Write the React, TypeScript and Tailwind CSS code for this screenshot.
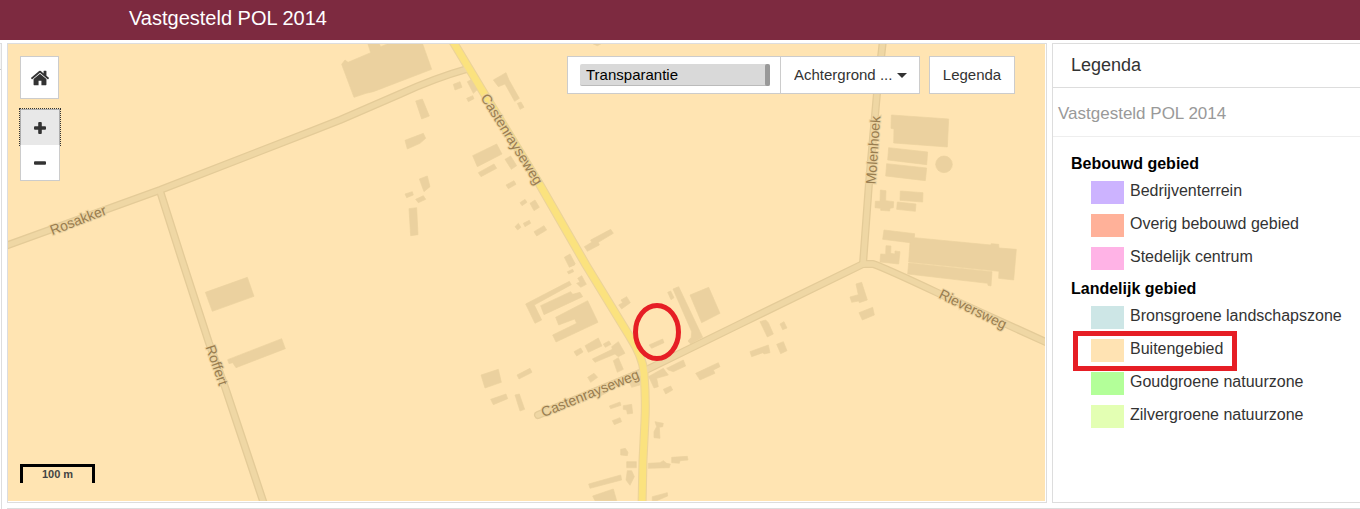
import { useState } from "react";
import clsx from "clsx";

/* ================= DATA ================= */

type LegendItem = { label: string; swatch: string; highlighted?: boolean };
type LegendGroup = { title: string; items: LegendItem[] };

const legend: LegendGroup[] = [
  {
    title: "Bebouwd gebied",
    items: [
      { label: "Bedrijventerrein", swatch: "bg-[#ccb3ff]" },
      { label: "Overig bebouwd gebied", swatch: "bg-[#ffb199]" },
      { label: "Stedelijk centrum", swatch: "bg-[#ffb3e6]" },
    ],
  },
  {
    title: "Landelijk gebied",
    items: [
      { label: "Bronsgroene landschapszone", swatch: "bg-[#cde6e6]" },
      { label: "Buitengebied", swatch: "bg-[#ffe3b3]", highlighted: true },
      { label: "Goudgroene natuurzone", swatch: "bg-[#b3ff99]" },
      { label: "Zilvergroene natuurzone", swatch: "bg-[#e3ffb3]" },
    ],
  },
];

// Buildings per map tile, drawn at three units per pixel
const tiles = [
  {
    x: 340,
    y: 30,
    buildings: [
      "M5 103L15 90 24 97 92 68 84 42 118 42 122 50 142 42 248 42 275 118 100 185 78 190 42 202Z",
      "M340 163L360 155 366 172 345 180Z",
      "M382 155L395 148 413 178 400 190Z",
      "M380 205L398 197 402 206 385 215Z",
      "M460 150L498 128 507 150 538 205 524 214 495 162 475 170Z",
      "M532 220L543 216 552 232 540 238Z",
      "M227 213L247 207 268 258 245 267Z",
      "M195 331L250 310 257 325 240 340 202 357Z",
      "M398 377L470 342 486 372 412 410Z",
      "M415 428L462 402 470 415 423 440Z",
      "M495 388L512 378 530 407 514 418Z",
      "M498 465L522 452 528 463 505 476Z",
      "M238 447L262 438 270 470 252 485Z",
      "M195 492L217 485 220 495 200 503Z",
      "M227 508L250 497 257 508 235 518Z",
      "M207 536L230 533 234 614 212 617Z",
      "M540 518L555 508 561 517 546 527Z",
      "M570 520L585 510 598 532 582 542Z",
      "M525 590L535 580 543 592 533 600Z",
      "M550 580L568 571 572 580 555 590Z",
      "M582 605L612 587 620 600 590 618Z",
      "M733 650L755 637 752 630 812 598 820 610 775 637 778 645 742 664Z",
      "M673 682L690 672 706 702 688 712Z",
      "M760 42L782 42 772 47Z",
    ],
  },
  {
    x: 680,
    y: 30,
    buildings: [
      "M634 255L806 267 802 351 641 339 642 297 633 295Z",
      "M626 353L743 366 740 404 623 390Z",
      "M620 401L740 414 736 452 617 438Z",
      "M767 403a25 25 0 1 0 50 0a25 25 0 1 0-50 0Z",
      "M661 483L729 488 728 516 660 511Z",
      "M652 516L708 522 706 544 650 538Z",
      "M601 480L618 482 617 512 641 515 640 533 630 535 629 543 602 541 602 535 585 533 586 514 600 514Z",
    ],
  },
  {
    x: 720,
    y: 200,
    buildings: [
      "M492 90L584 101 583 113 812 135 814 131 836 133 837 144 889 148 881 240 836 235 837 214 566 186 570 128 488 118Z",
      "M566 189L816 215 813 258 804 256 803 250 563 222Z",
      "M498 137L513 138 512 160 525 162 525 153 540 155 536 192 480 186 482 162 497 163Z",
      "M408 252L425 247 442 300 418 308 416 303 395 307 390 291 415 284Z",
      "M417 338L458 322 463 345 427 360Z",
      "M120 365L137 360 145 368 160 402 142 411Z",
      "M180 372L192 365 201 384 188 389Z",
      "M90 455L145 435 150 458 132 462 129 458 95 470Z",
      "M170 433L190 425 201 452 182 461Z",
    ],
  },
  {
    x: 0,
    y: 260,
    buildings: [
      "M616 97L742 52 762 109 637 154Z",
      "M683 299L845 236 856 266 708 323 698 308 687 311Z",
    ],
  },
  {
    x: 400,
    y: 260,
    buildings: [
      "M500 0L518 0 524 15 510 20Z",
      "M502 35L518 28 521 35 506 42Z",
      "M533 55L545 47 559 73 542 82 530 70 540 66Z",
      "M377 132L508 64 514 74 403 135 425 180 405 190Z",
      "M422 137L512 95 518 103 540 97 548 110 432 164Z",
      "M467 172L563 122 594 187 468 246 458 225 530 190 524 177 476 195Z",
      "M656 135L668 128 663 120 680 110 691 128 665 147Z",
      "M803 97L812 93 822 113 813 119Z",
      "M819 87L836 80 908 232 872 252 864 243 874 232 875 215Z",
      "M870 105L926 82 960 160 905 188Z",
      "M747 255L788 237 792 248 755 265Z",
      "M555 257L595 234 606 258 565 277Z",
      "M522 275L542 264 549 276 530 288Z",
      "M610 252L627 243 633 253 616 262Z",
      "M577 297L637 268 635 260 655 245 675 280 655 290 645 282 585 307Z",
      "M640 302L655 293 670 328 652 337Z",
      "M563 352L582 340 593 352 572 367Z",
      "M243 345L295 328 304 367 255 384Z",
      "M351 345L390 325 396 337 357 357Z",
      "M272 418L318 402 323 416 280 434Z",
      "M345 405L358 402 374 448 360 453Z",
      "M590 395L617 388 617 400 600 408Z",
      "M685 360L715 350 720 375 695 382Z",
      "M745 350L790 325 805 345 770 355 775 380 762 384 750 358Z",
      "M800 325L850 300 857 318 820 335 805 330Z",
      "M887 340L955 308 960 320 940 330 945 340 900 360Z",
      "M790 388L812 378 818 390 797 402Z",
      "M628 438L660 426 663 436 632 446Z",
      "M670 437L695 433 698 460 682 462 680 450 670 448Z",
      "M637 482L660 473 665 485 643 494Z",
      "M765 485L790 490 788 500 778 502 780 535 762 533 762 515 770 500Z",
      "M662 568L676 565 684 577 682 587 662 585Z",
      "M680 605L709 605 709 623 680 623Z",
      "M745 610L780 608 790 602 800 610 811 612 808 623 745 625Z",
      "M815 592L862 589 864 600 840 602 838 610 815 608Z",
      "M682 632L695 632 703 650 690 676 678 660Z",
      "M566 672L662 645 665 660 570 685Z",
      "M578 708L640 687 650 722 585 722Z",
      "M757 710L802 698 803 708 770 722 757 722Z",
    ],
  },
];

const roads = [
  "M0 248L8 245 160 190 312 131 340 120 400 94Q435 78 467 69",
  "M160 191L182 260 209 343 225 387 265 507",
  "M538 415L640 373 740 324 863 264",
  "M883 40L877 93 869 183 863 264",
  "M863 264L873 264Q885 268 938 293L1050 344",
];

const mainRoad =
  "M452 40L485 95 540 185 586 265 630 337Q643 357 644 373Q646 400 645 420L643 460 642 507";

const streetNames = [
  { name: "Rosakker", x: 78, y: 220, angle: -21 },
  { name: "Castenrayseweg", x: 512, y: 139, angle: 58 },
  { name: "Roffert", x: 217, y: 365, angle: 71 },
  { name: "Molenhoek", x: 873, y: 150, angle: -86 },
  { name: "Rieversweg", x: 973, y: 309, angle: 26 },
  { name: "Castenrayseweg", x: 590, y: 393, angle: -22 },
];

/* ================= MAP ================= */

function MapCanvas() {
  return (
    <svg
      viewBox="8 44 1037 457"
      preserveAspectRatio="xMinYMin slice"
      className="block w-full bg-[#ffe4b2]"
      role="img"
      aria-label="Kaart"
    >
      {tiles.map((tile) => (
        <g
          key={`${tile.x}-${tile.y}`}
          transform={`translate(${tile.x} ${tile.y}) scale(0.33333)`}
          fill="#ebd19f"
          stroke="#ebd19f"
          strokeWidth="2"
        >
          {tile.buildings.map((d) => (
            <path key={d} d={d} />
          ))}
        </g>
      ))}

      <g fill="none" strokeLinecap="round" strokeLinejoin="round">
        {roads.map((d) => (
          <path key={d} d={d} stroke="#e4cb98" strokeWidth="8" />
        ))}
        <path d={mainRoad} stroke="#ecd399" strokeWidth="9" />
        {roads.map((d) => (
          <path key={d} d={d} stroke="#efd7a4" strokeWidth="5.4" />
        ))}
        <path d={mainRoad} stroke="#fbe27e" strokeWidth="6.8" />
      </g>

      <g
        fill="#997d4f"
        stroke="#ecd3a0"
        strokeWidth="2"
        paintOrder="stroke"
        textAnchor="middle"
        dominantBaseline="central"
        className="font-['Liberation_Sans',Arial,sans-serif] text-[14px]"
      >
        {streetNames.map((s) => (
          <text
            key={`${s.name}-${s.x}`}
            transform={`translate(${s.x} ${s.y}) rotate(${s.angle})`}
          >
            {s.name}
          </text>
        ))}
      </g>

      <ellipse
        cx="657"
        cy="332"
        rx="21.5"
        ry="26.5"
        fill="none"
        stroke="#e61e25"
        strokeWidth="5"
      />
    </svg>
  );
}

function MapControls() {
  return (
    <div className="absolute top-3 left-3 flex flex-col items-start gap-[10px] text-[#333]">
      <button
        type="button"
        aria-label="Beginpositie"
        className="flex h-[43px] w-[39px] items-center justify-center border border-[#ccc] bg-white"
      >
        <svg viewBox="0 0 1792 1792" className="size-5" fill="currentColor">
          <path d="M1472 992v480q0 26-19 45t-45 19h-384v-384h-256v384h-384q-26 0-45-19t-19-45v-480q0-1 .5-3t.5-3l575-474 575 474q1 2 1 6zm223-69l-62 74q-8 9-21 11h-3q-13 0-21-7l-692-577-692 577q-12 8-24 7-13-2-21-11l-62-74q-8-10-7-23.5t11-21.5l719-599q32-26 76-26t76 26l244 204v-195q0-14 9-23t23-9h192q14 0 23 9t9 23v408l219 182q10 8 11 21.5t-7 23.5z" />
        </svg>
      </button>
      <div className="flex w-10 flex-col">
        <button
          type="button"
          aria-label="Inzoomen"
          className="flex h-9 items-center justify-center border border-b-0 border-[#adadad] bg-[#e8e8e8] outline-1 outline-dotted outline-[#333]"
        >
          <svg viewBox="0 0 12 12" className="size-3" fill="currentColor">
            <rect y="4.2" width="12" height="3.6" rx="1" />
            <rect x="4.2" width="3.6" height="12" rx="1" />
          </svg>
        </button>
        <button
          type="button"
          aria-label="Uitzoomen"
          className="relative flex h-9 items-center justify-center border border-t-0 border-[#ccc] bg-white"
        >
          <svg viewBox="0 0 12 12" className="size-3" fill="currentColor">
            <rect y="4.2" width="12" height="3.6" rx="1" />
          </svg>
        </button>
      </div>
    </div>
  );
}

function MapToolbar() {
  const [opacity, setOpacity] = useState(100);

  return (
    <div className="absolute top-3 right-[31px] flex gap-[9px] text-[15px] text-[#333]">
      <div className="flex h-[38px] border border-[#ccc] bg-white">
        <div className="relative flex items-center pr-[10px] pl-3">
          <input
            id="opacity"
            type="range"
            min={0}
            max={100}
            value={opacity}
            onChange={(e) => setOpacity(Number(e.target.value))}
            className="h-[22px] w-[190px] appearance-none rounded-xs border-b border-[#bbb] bg-[#d9d9d9] [&::-webkit-slider-thumb]:h-[22px] [&::-webkit-slider-thumb]:w-[5px] [&::-webkit-slider-thumb]:appearance-none [&::-webkit-slider-thumb]:rounded-xs [&::-webkit-slider-thumb]:bg-[#999]"
          />
          <label
            htmlFor="opacity"
            className="pointer-events-none absolute left-[18px] text-black"
          >
            Transparantie
          </label>
        </div>
        <div className="relative flex items-center border-l border-[#ccc]">
          <select
            aria-label="Achtergrond"
            className="h-full w-[138px] appearance-none bg-white pl-[13px]"
          >
            <option>Achtergrond ...</option>
          </select>
          <svg
            viewBox="0 0 10 5"
            className="pointer-events-none absolute right-3 h-[5px] w-[10px]"
            fill="currentColor"
          >
            <path d="M0 0h10L5 5z" />
          </svg>
        </div>
      </div>
      <button
        type="button"
        className="h-[38px] w-[86px] border border-[#ccc] bg-white"
      >
        Legenda
      </button>
    </div>
  );
}

/* ================= LEGEND ================= */

function Legend() {
  return (
    <aside className="w-[308px] shrink-0 border-y border-l border-[#ddd]">
      <h2 className="border-b border-[#ddd] px-[18px] py-[9px] text-[18px] leading-[25px] text-[#333]">
        Legenda
      </h2>
      <h3 className="border-b border-[#eee] px-[5px] pt-[14px] pb-[10px] text-[17px] leading-6 text-[#999]">
        Vastgesteld POL 2014
      </h3>
      <div className="space-y-px px-[18px] pt-[14px] text-base whitespace-nowrap">
        {legend.map((group) => (
          <section key={group.title}>
            <h4 className="leading-[25px] font-bold text-black">
              {group.title}
            </h4>
            <ul>
              {group.items.map((item) => (
                <li
                  key={item.label}
                  className="relative flex h-[33px] items-center gap-[6px] pl-5 text-[#333]"
                >
                  <span className={clsx("h-[23px] w-[33px]", item.swatch)} />
                  <span className="pb-[3px]">{item.label}</span>
                  {item.highlighted && (
                    <span className="absolute -top-[3px] left-[2px] h-10 w-[164px] border-5 border-[#e61e25]" />
                  )}
                </li>
              ))}
            </ul>
          </section>
        ))}
      </div>
    </aside>
  );
}

/* ================= PAGE ================= */

export default function App() {
  return (
    <div className="flex min-h-screen flex-col overflow-hidden bg-white font-['Liberation_Sans',Arial,sans-serif]">
      <header className="flex h-10 items-center bg-[#7d2a40] px-[129px] pb-1">
        <h1 className="text-xl text-white">Vastgesteld POL 2014</h1>
      </header>

      <div className="flex flex-1 gap-[5px] pt-[3px]">
        <div className="w-[2px] border-t border-r border-[#ddd]">
          <div className="h-[26px] border-b border-[#ccc] bg-[#f5f5f5]" />
        </div>

        <div className="flex min-w-0 flex-1 flex-col gap-[5px]">
          <div className="flex flex-1 gap-[5px]">
            <main className="relative flex min-w-0 flex-1 border border-[#ddd] pr-px pb-px">
              <MapCanvas />
              <MapControls />
              <MapToolbar />
              <div className="absolute bottom-[19px] left-3 h-[19px] w-[75px] border-[3px] border-b-0 border-black text-center text-[11px] leading-[15px] font-bold text-[#444]">
                100 m
              </div>
            </main>
            <Legend />
          </div>
          <footer className="border-t border-[#ddd]" />
        </div>
      </div>
    </div>
  );
}
